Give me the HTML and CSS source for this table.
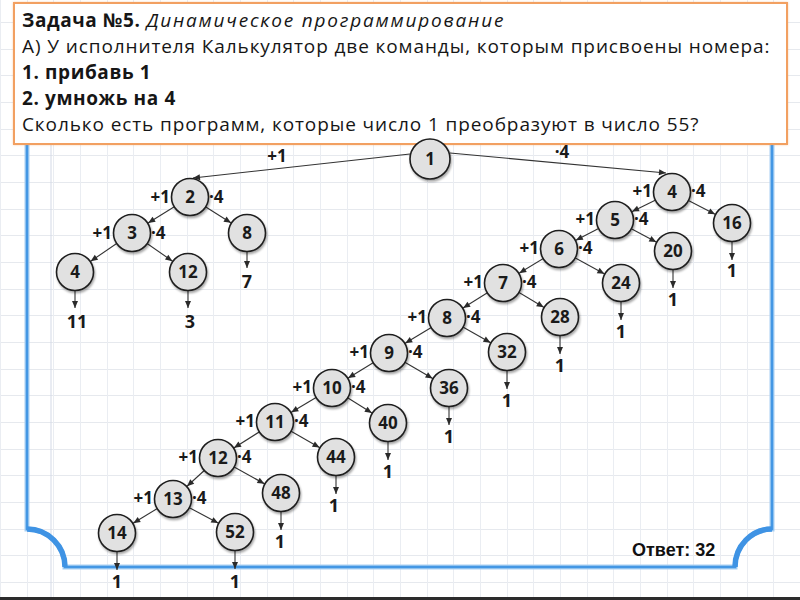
FILE: index.html
```html
<!DOCTYPE html>
<html lang="ru">
<head>
<meta charset="utf-8">
<title>Задача №5</title>
<link rel="stylesheet" href="styles.css">
</head>
<body>
<div class="slide">
  <svg class="frame" viewBox="0 0 800 600" aria-hidden="true">
    <line class="rule" x1="51" y1="140" x2="51" y2="597"/>
    <path class="frame-outer" d="M27,140 V529 A38,38 0 0 1 65,567 H735 A37,38 0 0 1 772,529 V140"/>
    <path class="frame-inner" d="M27,140 V529 A38,38 0 0 1 65,567 H735 A37,38 0 0 1 772,529 V140"/>
    <path class="frame-corner" d="M27,529 A38,38 0 0 1 65,567"/>
    <path class="frame-corner" d="M735,567 A37,38 0 0 1 772,529"/>
  </svg>

  <div class="task">
    <p><b>Задача №5.</b> <i>Динамическое программирование</i></p>
    <p>А) У исполнителя Калькулятор две команды, которым присвоены номера:</p>
    <p><b>1. прибавь 1</b></p>
    <p><b>2. умножь на 4</b></p>
    <p>Сколько есть программ, которые число 1 преобразуют в число 55?</p>
  </div>

  <svg class="tree" viewBox="0 0 800 600">
    <defs>
      <marker id="arr" markerUnits="userSpaceOnUse" markerWidth="40" markerHeight="10" refX="39" refY="5" orient="auto" class="mk">
        <path d="M13,2 L20,5 L13,8 z"/>
      </marker>
      <marker id="tip" markerUnits="userSpaceOnUse" markerWidth="8" markerHeight="10" refX="7" refY="5" orient="auto" class="mk">
        <path d="M0,2 L7,5 L0,8 z"/>
      </marker>
    </defs>

    <!-- root edges -->
    <line class="edge tipped" x1="410" y1="154" x2="193" y2="178"/>
    <line class="edge tipped" x1="450" y1="153" x2="666" y2="173"/>

    <!-- tree edges (centre to centre) -->
    <line class="edge" x1="190" y1="197" x2="132" y2="233"/>
    <line class="edge" x1="190" y1="197" x2="247" y2="233"/>
    <line class="edge" x1="132" y1="233" x2="75" y2="272"/>
    <line class="edge" x1="132" y1="233" x2="188" y2="272"/>

    <line class="edge" x1="672" y1="192" x2="615" y2="220"/>
    <line class="edge" x1="672" y1="192" x2="732" y2="223"/>
    <line class="edge" x1="615" y1="220" x2="559" y2="249"/>
    <line class="edge" x1="615" y1="220" x2="673" y2="251"/>
    <line class="edge" x1="559" y1="249" x2="503" y2="283"/>
    <line class="edge" x1="559" y1="249" x2="621" y2="283"/>
    <line class="edge" x1="503" y1="283" x2="447" y2="318"/>
    <line class="edge" x1="503" y1="283" x2="560" y2="317"/>
    <line class="edge" x1="447" y1="318" x2="389" y2="353"/>
    <line class="edge" x1="447" y1="318" x2="507" y2="352"/>
    <line class="edge" x1="389" y1="353" x2="332" y2="388"/>
    <line class="edge" x1="389" y1="353" x2="449" y2="388"/>
    <line class="edge" x1="332" y1="388" x2="275" y2="422"/>
    <line class="edge" x1="332" y1="388" x2="388" y2="423"/>
    <line class="edge" x1="275" y1="422" x2="218" y2="458"/>
    <line class="edge" x1="275" y1="422" x2="336" y2="457"/>
    <line class="edge" x1="218" y1="458" x2="173" y2="499"/>
    <line class="edge" x1="218" y1="458" x2="281" y2="493"/>
    <line class="edge" x1="173" y1="499" x2="117" y2="533"/>
    <line class="edge" x1="173" y1="499" x2="235" y2="532"/>

    <!-- leaf arrows -->
    <line class="edge tipped" x1="75" y1="291" x2="75" y2="308"/>
    <line class="edge tipped" x1="188" y1="291" x2="188" y2="308"/>
    <line class="edge tipped" x1="247" y1="252" x2="247" y2="268"/>
    <line class="edge tipped" x1="732" y1="242" x2="732" y2="260"/>
    <line class="edge tipped" x1="673" y1="270" x2="673" y2="288"/>
    <line class="edge tipped" x1="621" y1="302" x2="621" y2="320"/>
    <line class="edge tipped" x1="560" y1="336" x2="560" y2="354"/>
    <line class="edge tipped" x1="507" y1="371" x2="507" y2="389"/>
    <line class="edge tipped" x1="449" y1="407" x2="449" y2="425"/>
    <line class="edge tipped" x1="388" y1="442" x2="388" y2="460"/>
    <line class="edge tipped" x1="336" y1="476" x2="336" y2="494"/>
    <line class="edge tipped" x1="281" y1="512" x2="281" y2="530"/>
    <line class="edge tipped" x1="235" y1="551" x2="235" y2="569"/>
    <line class="edge tipped" x1="117" y1="552" x2="117" y2="570"/>

    <!-- nodes -->
    <circle class="node" cx="430" cy="159" r="20"/>
    <circle class="node" cx="190" cy="197" r="18.5"/>
    <circle class="node" cx="132" cy="233" r="18.5"/>
    <circle class="node" cx="247" cy="233" r="18.5"/>
    <circle class="node" cx="75" cy="272" r="18.5"/>
    <circle class="node" cx="188" cy="272" r="18.5"/>
    <circle class="node" cx="672" cy="192" r="18.5"/>
    <circle class="node" cx="732" cy="223" r="18.5"/>
    <circle class="node" cx="615" cy="220" r="18.5"/>
    <circle class="node" cx="673" cy="251" r="18.5"/>
    <circle class="node" cx="559" cy="249" r="18.5"/>
    <circle class="node" cx="621" cy="283" r="18.5"/>
    <circle class="node" cx="503" cy="283" r="18.5"/>
    <circle class="node" cx="560" cy="317" r="18.5"/>
    <circle class="node" cx="447" cy="318" r="18.5"/>
    <circle class="node" cx="507" cy="352" r="18.5"/>
    <circle class="node" cx="389" cy="353" r="18.5"/>
    <circle class="node" cx="449" cy="388" r="18.5"/>
    <circle class="node" cx="332" cy="388" r="18.5"/>
    <circle class="node" cx="388" cy="423" r="18.5"/>
    <circle class="node" cx="275" cy="422" r="18.5"/>
    <circle class="node" cx="336" cy="457" r="18.5"/>
    <circle class="node" cx="218" cy="458" r="18.5"/>
    <circle class="node" cx="281" cy="493" r="18.5"/>
    <circle class="node" cx="173" cy="499" r="18.5"/>
    <circle class="node" cx="235" cy="532" r="18.5"/>
    <circle class="node" cx="117" cy="533" r="18.5"/>

    <!-- node numbers -->
    <text class="num" x="430" y="165">1</text>
    <text class="num" x="190" y="203">2</text>
    <text class="num" x="132" y="239">3</text>
    <text class="num" x="247" y="239">8</text>
    <text class="num" x="75" y="278">4</text>
    <text class="num" x="188" y="278">12</text>
    <text class="num" x="672" y="198">4</text>
    <text class="num" x="732" y="229">16</text>
    <text class="num" x="615" y="226">5</text>
    <text class="num" x="673" y="257">20</text>
    <text class="num" x="559" y="255">6</text>
    <text class="num" x="621" y="289">24</text>
    <text class="num" x="503" y="289">7</text>
    <text class="num" x="560" y="323">28</text>
    <text class="num" x="447" y="324">8</text>
    <text class="num" x="507" y="358">32</text>
    <text class="num" x="389" y="359">9</text>
    <text class="num" x="449" y="394">36</text>
    <text class="num" x="332" y="394">10</text>
    <text class="num" x="388" y="429">40</text>
    <text class="num" x="275" y="428">11</text>
    <text class="num" x="336" y="463">44</text>
    <text class="num" x="218" y="464">12</text>
    <text class="num" x="281" y="499">48</text>
    <text class="num" x="173" y="505">13</text>
    <text class="num" x="235" y="538">52</text>
    <text class="num" x="117" y="539">14</text>

    <!-- operation labels -->
    <text class="op mid" x="277" y="162">+1</text>
    <text class="op mid" x="562" y="158">·4</text>

    <text class="op plus" x="170" y="203">+1</text><text class="op times" x="209" y="203">·4</text>
    <text class="op plus" x="112" y="239">+1</text><text class="op times" x="151" y="239">·4</text>
    <text class="op plus" x="652" y="197">+1</text><text class="op times" x="691" y="197">·4</text>
    <text class="op plus" x="595" y="225">+1</text><text class="op times" x="634" y="225">·4</text>
    <text class="op plus" x="539" y="254">+1</text><text class="op times" x="578" y="254">·4</text>
    <text class="op plus" x="483" y="288">+1</text><text class="op times" x="522" y="288">·4</text>
    <text class="op plus" x="427" y="323">+1</text><text class="op times" x="466" y="323">·4</text>
    <text class="op plus" x="369" y="358">+1</text><text class="op times" x="408" y="358">·4</text>
    <text class="op plus" x="312" y="393">+1</text><text class="op times" x="351" y="393">·4</text>
    <text class="op plus" x="255" y="427">+1</text><text class="op times" x="294" y="427">·4</text>
    <text class="op plus" x="198" y="463">+1</text><text class="op times" x="237" y="463">·4</text>
    <text class="op plus" x="153" y="504">+1</text><text class="op times" x="192" y="504">·4</text>

    <!-- leaf results -->
    <text class="leaf" x="77" y="328">11</text>
    <text class="leaf" x="190" y="328">3</text>
    <text class="leaf" x="247" y="288">7</text>
    <text class="leaf" x="732" y="277">1</text>
    <text class="leaf" x="673" y="306">1</text>
    <text class="leaf" x="621" y="338">1</text>
    <text class="leaf" x="560" y="372">1</text>
    <text class="leaf" x="507" y="407">1</text>
    <text class="leaf" x="449" y="443">1</text>
    <text class="leaf" x="388" y="478">1</text>
    <text class="leaf" x="334" y="512">1</text>
    <text class="leaf" x="280" y="548">1</text>
    <text class="leaf" x="235" y="588">1</text>
    <text class="leaf" x="117" y="588">1</text>

    <text class="answer" x="632" y="556">Ответ: 32</text>
  </svg>
</div>
</body>
</html>
```

FILE: styles.css
```css
html, body {
  margin: 0;
  padding: 0;
  background: #ffffff;
}

.slide {
  position: relative;
  width: 800px;
  height: 600px;
  box-sizing: border-box;
  overflow: hidden;
  border-bottom: 3px solid #2c2c2c;
  padding-top: 2px;
  background-color: #ffffff;
  background-image:
    repeating-linear-gradient(to right, #eaedf2 0, #eaedf2 1px, transparent 1px, transparent 26.667px),
    repeating-linear-gradient(to bottom, transparent 0, transparent 22px, #e6e9ee 22px, #e6e9ee 23px, transparent 23px, transparent 26.667px);
}

.frame,
.tree {
  position: absolute;
  left: 0;
  top: 0;
  width: 800px;
  height: 600px;
}

.frame { z-index: 0; }
.tree { z-index: 2; pointer-events: none; }

.rule {
  stroke: #d3d9e6;
  stroke-width: 1;
}

.frame-outer {
  fill: none;
  stroke: #a9d0f3;
  stroke-width: 5;
}

.frame-inner {
  fill: none;
  stroke: #4497e4;
  stroke-width: 2.5;
}

.frame-corner {
  fill: none;
  stroke: #3f93e4;
  stroke-width: 5.5;
}

.task {
  position: relative;
  z-index: 1;
  margin: 0 12px 0 13px;
  height: 143px;
  box-sizing: border-box;
  padding: 3px 4px 0 7px;
  background: #ffffff;
  border: 2px solid #f2a061;
  box-shadow: 0 0 2px rgba(240, 150, 80, 0.45);
  font-family: "Open Sans", "Noto Sans", sans-serif;
  font-size: 19px;
  letter-spacing: 0.9px;
  line-height: 26px;
  color: #161616;
}

.task p {
  margin: 0;
  white-space: nowrap;
}

.task b { font-weight: 700; letter-spacing: 0.6px; }
.task i { font-style: italic; letter-spacing: 1.8px; }

.mk {
  overflow: visible;
}

.mk path {
  fill: #2a2a2a;
}

.edge {
  stroke: #333333;
  stroke-width: 1.1;
  fill: none;
  marker-end: url(#arr);
}

.edge.tipped {
  marker-end: url(#tip);
}

.node {
  fill: #e1e1e1;
  stroke: #1e1e1e;
  stroke-width: 1.6;
  filter: drop-shadow(1.5px 2px 1.2px rgba(0, 0, 0, 0.35));
}

.num {
  font-family: "Open Sans", "Noto Sans", sans-serif;
  font-weight: 700;
  font-size: 17px;
  fill: #1a1a1a;
  text-anchor: middle;
}

.op {
  font-family: "Open Sans", "Noto Sans", sans-serif;
  font-weight: 700;
  font-size: 17px;
  fill: #1a1a1a;
}

.op.plus { text-anchor: end; }
.op.times { text-anchor: start; }
.op.mid { text-anchor: middle; }

.leaf {
  font-family: "Open Sans", "Noto Sans", sans-serif;
  font-weight: 700;
  font-size: 18px;
  fill: #1a1a1a;
  text-anchor: middle;
}

.answer {
  font-family: "Liberation Sans", Arial, sans-serif;
  font-weight: 700;
  font-size: 18px;
  fill: #111111;
}
```
